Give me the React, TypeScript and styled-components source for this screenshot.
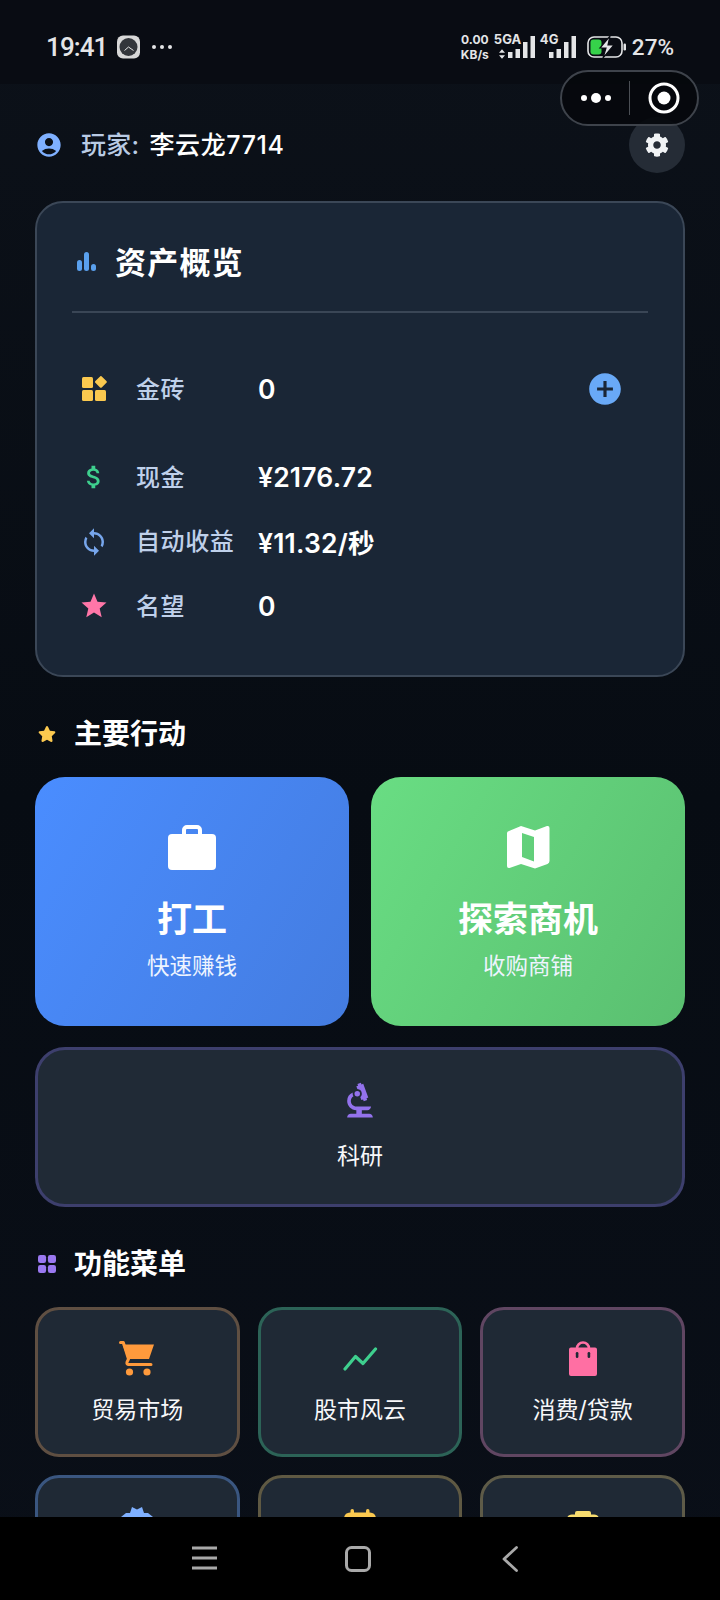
import React from "react";
import styled, { createGlobalStyle } from "styled-components";
import { FaCog, FaStar } from "react-icons/fa";
import { MdAccountCircle, MdAddCircle, MdAttachMoney, MdBiotech, MdStar, MdSync } from "react-icons/md";

const Global = createGlobalStyle`
  html, body { margin: 0; padding: 0; background: #000; }
  * { box-sizing: border-box; }
  body { font-family: "Inter", "Noto Sans CJK SC", sans-serif; }
`;

const Screen = styled.div`
  position: relative;
  width: 720px;
  height: 1600px;
  display: flex;
  flex-direction: column;
  overflow: hidden;
  color: #fff;
  background: linear-gradient(180deg, #0c1119 0%, #070c13 50%, #0a0f18 100%);
`;

const StatusBar = styled.div`
  flex: 0 0 84px;
  display: flex;
  justify-content: space-between;
  align-items: flex-start;
  padding: 30px 46px 0 46px;
  background: #090c13;
  color: #e4e5e7;
`;

const StatusLeft = styled.div`
  display: flex;
  align-items: center;
  height: 34px;
  gap: 10px;
`;

const Clock = styled.span`
  font-family: "Roboto", sans-serif;
  font-size: 26px;
  font-weight: 500;
  letter-spacing: -0.9px;
`;

const MoreDots = styled.span`
  display: flex;
  gap: 4px;
  margin-left: 2px;
  & > i { width: 4px; height: 4px; border-radius: 50%; background: #e4e5e7; }
`;

const StatusRight = styled.div`
  display: flex;
  align-items: center;
  height: 34px;
`;

const Speed = styled.div`
  font-family: "Inter", sans-serif;
  font-size: 12px;
  font-weight: 700;
  line-height: 15px;
  text-align: center;
  width: 28px;
  white-space: nowrap;
  display: flex;
  flex-direction: column;
  align-items: center;
`;

const SimCell = styled.div<{ $w: number }>`
  position: relative;
  width: ${(p) => p.$w}px;
  height: 34px;
  margin-left: 4px;
  display: flex;
  justify-content: flex-end;
  align-items: center;
`;

const NetTag = styled.span`
  position: absolute;
  left: 1px;
  top: 3px;
  font-family: "Inter", sans-serif;
  font-size: 13px;
  font-weight: 700;
  line-height: 13px;
`;

const ArrowSlot = styled.span`
  position: absolute;
  left: 6px;
  top: 19px;
  display: flex;
`;

const BatteryBox = styled.span`
  display: flex;
  margin-left: 11px;
`;

const BatteryText = styled.span`
  font-family: "Roboto", sans-serif;
  font-size: 22.5px;
  font-weight: 500;
  margin-left: 5px;
`;

const Capsule = styled.div`
  position: absolute;
  left: 560px;
  top: 70px;
  width: 139px;
  height: 56px;
  border-radius: 28px;
  border: 2px solid #3e434b;
  background: rgba(5, 8, 12, 0.9);
  display: flex;
  align-items: center;
  z-index: 3;
`;

const CapsuleSide = styled.div`
  flex: 1;
  display: flex;
  align-items: center;
  justify-content: center;
  gap: 4px;
`;

const CapsuleRule = styled.span`
  width: 1px;
  height: 34px;
  background: #4b4f55;
`;

const CapsuleDot = styled.i<{ $d: number }>`
  width: ${(p) => p.$d}px;
  height: ${(p) => p.$d}px;
  border-radius: 50%;
  background: #fff;
`;

const Content = styled.main`
  flex: 1;
  min-height: 0;
  overflow: hidden;
  padding: 33px 35px 0;
`;

const UserRow = styled.header`
  display: flex;
  justify-content: space-between;
  align-items: center;
  height: 56px;
`;

const UserName = styled.div`
  display: flex;
  align-items: center;
  font-size: 25px;
  font-weight: 500;
  line-height: 30px;
  letter-spacing: 0.3px;
  & > svg { color: #7fb0ff; margin-right: 18px; }
`;

const UserKey = styled.span`
  color: #b9cbe4;
  margin-right: 10px;
`;

const UserValue = styled.span`
  letter-spacing: 0.6px;
`;

const SettingsButton = styled.button`
  width: 56px;
  height: 56px;
  border: 0;
  border-radius: 50%;
  background: #252c36;
  color: #f1f3f5;
  display: flex;
  align-items: center;
  justify-content: center;
  padding: 0;
`;

const AssetCard = styled.section`
  margin-top: 28px;
  height: 476px;
  padding: 35px 35px 0;
  border: 2px solid #3b4757;
  border-radius: 28px;
  background: #1a2636;
`;

const CardTitleRow = styled.div`
  display: flex;
  align-items: center;
  height: 48px;
  margin-bottom: 25px;
  padding-left: 5px;
  & > svg { margin-right: 19px; }
`;

const CardTitle = styled.h2`
  margin: -4px 0 0;
  font-size: 31px;
  font-weight: 700;
  letter-spacing: 1.2px;
`;

const Divider = styled.hr`
  margin: 0 0 44px;
  border: 0;
  height: 2px;
  background: #3a4656;
`;

const AssetRow = styled.div<{ $gap?: number }>`
  display: grid;
  grid-template-columns: 65px 122px 1fr auto;
  align-items: center;
  height: 64.5px;
  margin-bottom: ${(p) => p.$gap ?? 0}px;
  padding-right: 24px;
`;

const AssetIcon = styled.span<{ $c: string }>`
  display: flex;
  justify-content: center;
  width: 44px;
  color: ${(p) => p.$c};
`;

const AssetLabel = styled.span`
  font-size: 24px;
  font-weight: 500;
  letter-spacing: 0.6px;
  color: #bfd0ea;
  white-space: nowrap;
  margin-left: -1px;
  padding-bottom: 4px;
`;

const AssetValue = styled.span`
  font-family: "Inter", "Noto Sans CJK SC", sans-serif;
  font-size: 26.5px;
  font-weight: 600;
  letter-spacing: 0.2px;
  margin-left: -1px;
  color: #fff;
`;

const AddButton = styled.span`
  display: flex;
  color: #69a9f7;
`;

const SectionHead = styled.h3<{ $top: number; $bottom: number }>`
  display: flex;
  align-items: center;
  height: 40px;
  margin: ${(p) => p.$top}px 0 ${(p) => p.$bottom}px;
  padding-left: 3px;
  font-size: 28px;
  font-weight: 700;
  line-height: 40px;
  & > svg { margin-right: 18px; }
`;

const ActionGrid = styled.div`
  display: grid;
  grid-template-columns: 1fr 1fr;
  gap: 22px;
`;

const ActionCard = styled.div<{ $from: string; $to: string }>`
  height: 249px;
  border-radius: 30px;
  background: linear-gradient(120deg, ${(p) => p.$from}, ${(p) => p.$to});
  display: flex;
  flex-direction: column;
  align-items: center;
  padding-top: 47px;
`;

const ActionIcon = styled.div`
  height: 46px;
  display: flex;
  align-items: center;
`;

const ActionTitle = styled.div`
  margin-top: 24px;
  font-size: 35px;
  font-weight: 700;
  line-height: 50px;
`;

const ActionSub = styled.div`
  margin-top: 6px;
  font-size: 22.5px;
  line-height: 32px;
  color: #eef4ff;
`;

const ResearchCard = styled.div`
  height: 160px;
  margin-top: 21px;
  border: 3px solid #3d3f6d;
  border-radius: 30px;
  background: #202a36;
  display: flex;
  flex-direction: column;
  align-items: center;
  padding-top: 33px;
  color: #9372ec;
`;

const TileLabel = styled.div`
  font-size: 23px;
  line-height: 32px;
  color: #f7f8fa;
`;

const ResearchLabel = styled(TileLabel)`
  margin-top: 21px;
`;

const MenuGrid = styled.div`
  display: grid;
  grid-template-columns: repeat(3, 1fr);
  column-gap: 18px;
  row-gap: 18px;
`;

const MenuTile = styled.div<{ $edge: string }>`
  height: 150px;
  border: 3px solid ${(p) => p.$edge};
  border-radius: 24px;
  background: #1f2935;
  display: flex;
  flex-direction: column;
  align-items: center;
  padding-top: 31px;
`;

const TileIcon = styled.div`
  width: 36px;
  height: 36px;
  display: flex;
  align-items: center;
  justify-content: center;
`;

const MenuLabel = styled(TileLabel)`
  margin-top: 17px;
`;

const NavBar = styled.nav`
  flex: 0 0 83px;
  background: #000;
  display: flex;
  align-items: flex-start;
  padding: 29px 0 0 192px;
  color: #a9a9a9;
`;

const NavSlot = styled.span<{ $w: number }>`
  display: flex;
  width: ${(p) => p.$w}px;
`;

const Bars = () => (
  <svg width="19" height="20" viewBox="0 0 19 20" fill="#5aa0ee">
    <rect x="0" y="8" width="5" height="11" rx="2.5" />
    <rect x="7" y="0" width="5" height="19" rx="2.5" />
    <rect x="14" y="12" width="5" height="7" rx="2.5" />
  </svg>
);

const GoldIcon = () => (
  <svg width="26" height="26" viewBox="0 0 26 26" fill="#fbc94f">
    <rect x="1" y="1" width="11" height="11" rx="1.5" />
    <rect x="1" y="14" width="11" height="11" rx="1.5" />
    <rect x="14" y="14" width="11" height="11" rx="1.5" />
    <rect x="15.4" y="1.4" width="9" height="9" rx="1.2" transform="rotate(45 19.9 5.9)" />
  </svg>
);

const AppsIcon = () => (
  <svg width="18" height="18" viewBox="0 0 20 20" fill="#9a78f0">
    <rect x="0" y="0" width="9" height="9" rx="2.5" />
    <rect x="11" y="0" width="9" height="9" rx="2.5" />
    <rect x="0" y="11" width="9" height="9" rx="2.5" />
    <rect x="11" y="11" width="9" height="9" rx="2.5" />
  </svg>
);

const CaseIcon = () => (
  <svg width="48" height="45" viewBox="0 0 48 45" fill="#fff">
    <rect x="0" y="9" width="48" height="36" rx="4" />
    <path d="M16 11V5a3 3 0 0 1 3-3h10a3 3 0 0 1 3 3v6" fill="none" stroke="#fff" strokeWidth="4" />
  </svg>
);

const MapIcon = () => (
  <svg width="44" height="44" viewBox="0 0 44 44" fill="#fff">
    <path
      fillRule="evenodd"
      d="M3 6 15 1l14 4.500L41 1q2.500-.5 2.500 2v33q0 2-2 3L29 43.500 15 39 3.500 43q-2.500.5-2.500-2V8q0-1.500 2-2zM16 8v24l12 4.500V12z"
    />
  </svg>
);

const CartIcon = () => (
  <svg width="36" height="36" viewBox="0 0 36 36" fill="#ff9a3c">
    <path d="M3.500 3.500h31.500l-5 14.500H9z" />
    <path d="M1.500 1.500h2.800l5.200 16.500-1.500 3.200q-.6 2.300 1.700 2.300H32" fill="none" stroke="#ff9a3c" strokeWidth="3" strokeLinecap="round" strokeLinejoin="round" />
    <circle cx="10.500" cy="31" r="3.600" />
    <circle cx="28" cy="31" r="3.600" />
  </svg>
);

const TrendIcon = () => (
  <svg width="36" height="24" viewBox="0 0 36 24" fill="none" stroke="#3ecf8e" strokeWidth="3.2" strokeLinecap="round" strokeLinejoin="round">
    <path d="M3 22 13.500 9.500 21 16.500 33.500 2" />
  </svg>
);

const BagIcon = () => (
  <svg width="30" height="36" viewBox="0 0 30 36" fill="#ff6fa3">
    <path d="M3 6.500h24a2 2 0 0 1 2 2V33a2 2 0 0 1-2 2H3a2 2 0 0 1-2-2V8.500a2 2 0 0 1 2-2z" />
    <path d="M9 12V7.500a6 6 0 0 1 12 0V12" fill="none" stroke="#ff6fa3" strokeWidth="2.600" />
    <rect x="7.800" y="11" width="2.600" height="6" rx="1.300" fill="#1f2935" />
    <rect x="19.600" y="11" width="2.600" height="6" rx="1.300" fill="#1f2935" />
  </svg>
);

const BadgeIcon = () => (
  <svg width="32" height="40" viewBox="0 0 32 40" fill="#7fb0ff">
    <path d="M0 10 5 6h4l2-6 5 2.500L21 0l2 6h4l5 4v22l-5 4h-4l-2 4-5-2.500L11 40l-2-4H5l-5-4z" />
  </svg>
);

const CalendarIcon = () => (
  <svg width="32" height="36" viewBox="0 0 32 36" fill="#fbc94f">
    <path d="M0 10q0-6 6-6.500h20q6 .5 6 6.500v20q0 6-6 6H6q-6 0-6-6z" />
    <rect x="6.500" y="0" width="3.500" height="8" rx="1.700" />
    <rect x="22" y="0" width="3.500" height="8" rx="1.700" />
  </svg>
);

const CrateIcon = () => (
  <svg width="32" height="36" viewBox="0 0 32 36" fill="#f7dc6f">
    <path d="M8 4q0-2 2-2h12q2 0 2 2v1.500h3q5 0 5 5V32q0 4-4 4H4q-4 0-4-4V10.500q0-5 5-5h3z" />
  </svg>
);

const Signal = () => (
  <svg width="27" height="22" viewBox="0 0 27 22" fill="#e4e5e7">
    <rect x="0" y="16" width="4.500" height="6" />
    <rect x="7.500" y="13" width="4.500" height="9" />
    <rect x="15" y="6" width="4.500" height="16" />
    <rect x="22.500" y="0" width="4.500" height="22" />
  </svg>
);

const UpDown = () => (
  <svg width="6" height="10" viewBox="0 0 7 11" fill="#e4e5e7">
    <path d="M3.500 0 7 4H0zM3.500 11 0 7h7z" />
  </svg>
);

const Battery = () => (
  <svg width="40" height="22" viewBox="0 0 40 22">
    <rect x="1" y="1" width="34" height="20" rx="6" fill="none" stroke="#e4e5e7" strokeWidth="1.600" />
    <rect x="3.500" y="3.500" width="11" height="15" rx="3" fill="#36d24a" />
    <path d="M23 0 13 12h6l-3 10 11-13h-6z" fill="#e4e5e7" stroke="#090c13" strokeWidth="1.200" />
    <rect x="36.500" y="7.500" width="2.500" height="7" rx="1.200" fill="#e4e5e7" />
  </svg>
);

const ClockApp = () => (
  <svg width="23" height="24" viewBox="0 0 23 24">
    <rect x="0" y="0.500" width="23" height="23" rx="6" fill="#d8d8d8" />
    <circle cx="11.500" cy="12" r="9" fill="#33363b" />
    <path d="M11.500 12 7.500 15.500M11.500 12l5 3.500" stroke="#e6e6e6" strokeWidth="1" fill="none" />
  </svg>
);

const Menu = () => (
  <svg width="25" height="24" viewBox="0 0 25 24" stroke="currentColor" strokeWidth="3" fill="none">
    <path d="M0 2h25M0 12h25M0 22h25" />
  </svg>
);

const HomeKey = () => (
  <svg width="26" height="26" viewBox="0 0 26 26" stroke="currentColor" strokeWidth="3" fill="none">
    <rect x="1.500" y="1.500" width="23" height="23" rx="5" />
  </svg>
);

const BackKey = () => (
  <svg width="16" height="26" viewBox="0 0 16 26" stroke="currentColor" strokeWidth="2.800" fill="none" strokeLinecap="round" strokeLinejoin="round">
    <path d="M14.500 1.500 2 13l12.500 11.500" />
  </svg>
);

const assets = [
  { key: "cash", icon: <MdAttachMoney size={30} />, color: "#3ecf8e", label: "现金", value: "¥2176.72" },
  { key: "auto", icon: <MdSync size={30} />, color: "#77a6ec", label: "自动收益", value: "¥11.32/秒" },
  { key: "fame", icon: <MdStar size={30} />, color: "#ff76a8", label: "名望", value: "0" },
];

const menu = [
  { key: "trade", label: "贸易市场", edge: "#5f4f42", icon: <CartIcon /> },
  { key: "stock", label: "股市风云", edge: "#2c6357", icon: <TrendIcon /> },
  { key: "spend", label: "消费/贷款", edge: "#604662", icon: <BagIcon /> },
  { key: "honor", edge: "#3a5680", icon: <BadgeIcon /> },
  { key: "event", edge: "#5f5943", icon: <CalendarIcon /> },
  { key: "store", edge: "#5e5b48", icon: <CrateIcon /> },
];

export default function App() {
  return (
    <Screen>
      <Global />
      <StatusBar>
        <StatusLeft>
          <Clock>19:41</Clock>
          <ClockApp />
          <MoreDots><i /><i /><i /></MoreDots>
        </StatusLeft>
        <StatusRight>
          <Speed><span>0.00</span><span>KB/s</span></Speed>
          <SimCell $w={42}>
            <NetTag>5GA</NetTag>
            <ArrowSlot><UpDown /></ArrowSlot>
            <Signal />
          </SimCell>
          <SimCell $w={37}>
            <NetTag>4G</NetTag>
            <Signal />
          </SimCell>
          <BatteryBox><Battery /></BatteryBox>
          <BatteryText>27%</BatteryText>
        </StatusRight>
      </StatusBar>

      <Capsule>
        <CapsuleSide>
          <CapsuleDot $d={6} />
          <CapsuleDot $d={10} />
          <CapsuleDot $d={6} />
        </CapsuleSide>
        <CapsuleRule />
        <CapsuleSide>
          <svg width="32" height="32" viewBox="0 0 32 32">
            <circle cx="16" cy="16" r="14" fill="none" stroke="#fff" strokeWidth="3" />
            <circle cx="16" cy="16" r="6.500" fill="#fff" />
          </svg>
        </CapsuleSide>
      </Capsule>

      <Content>
        <UserRow>
          <UserName>
            <MdAccountCircle size={28} />
            <UserKey>玩家:</UserKey>
            <UserValue>李云龙7714</UserValue>
          </UserName>
          <SettingsButton aria-label="设置"><FaCog size={24} /></SettingsButton>
        </UserRow>

        <AssetCard>
          <CardTitleRow>
            <Bars />
            <CardTitle>资产概览</CardTitle>
          </CardTitleRow>
          <Divider />
          <AssetRow $gap={23.5}>
            <AssetIcon $c="#fbc94f"><GoldIcon /></AssetIcon>
            <AssetLabel>金砖</AssetLabel>
            <AssetValue>0</AssetValue>
            <AddButton><MdAddCircle size={38} /></AddButton>
          </AssetRow>
          {assets.map((a) => (
            <AssetRow key={a.key}>
              <AssetIcon $c={a.color}>{a.icon}</AssetIcon>
              <AssetLabel>{a.label}</AssetLabel>
              <AssetValue>{a.value}</AssetValue>
            </AssetRow>
          ))}
        </AssetCard>

        <SectionHead $top={37} $bottom={23}>
          <FaStar size={18} color="#fbc94f" />
          主要行动
        </SectionHead>
        <ActionGrid>
          <ActionCard $from="#4a8dff" $to="#447ce0">
            <ActionIcon><CaseIcon /></ActionIcon>
            <ActionTitle>打工</ActionTitle>
            <ActionSub>快速赚钱</ActionSub>
          </ActionCard>
          <ActionCard $from="#69dd83" $to="#5abf70">
            <ActionIcon><MapIcon /></ActionIcon>
            <ActionTitle>探索商机</ActionTitle>
            <ActionSub>收购商铺</ActionSub>
          </ActionCard>
        </ActionGrid>
        <ResearchCard>
          <TileIcon><MdBiotech size={44} style={{ flexShrink: 0 }} /></TileIcon>
          <ResearchLabel>科研</ResearchLabel>
        </ResearchCard>

        <SectionHead $top={37} $bottom={23}>
          <AppsIcon />
          功能菜单
        </SectionHead>
        <MenuGrid>
          {menu.map((m) => (
            <MenuTile key={m.key} $edge={m.edge}>
              <TileIcon>{m.icon}</TileIcon>
              {m.label && <MenuLabel>{m.label}</MenuLabel>}
            </MenuTile>
          ))}
        </MenuGrid>
      </Content>

      <NavBar>
        <NavSlot $w={153}><Menu /></NavSlot>
        <NavSlot $w={157}><HomeKey /></NavSlot>
        <NavSlot $w={16}><BackKey /></NavSlot>
      </NavBar>
    </Screen>
  );
}
